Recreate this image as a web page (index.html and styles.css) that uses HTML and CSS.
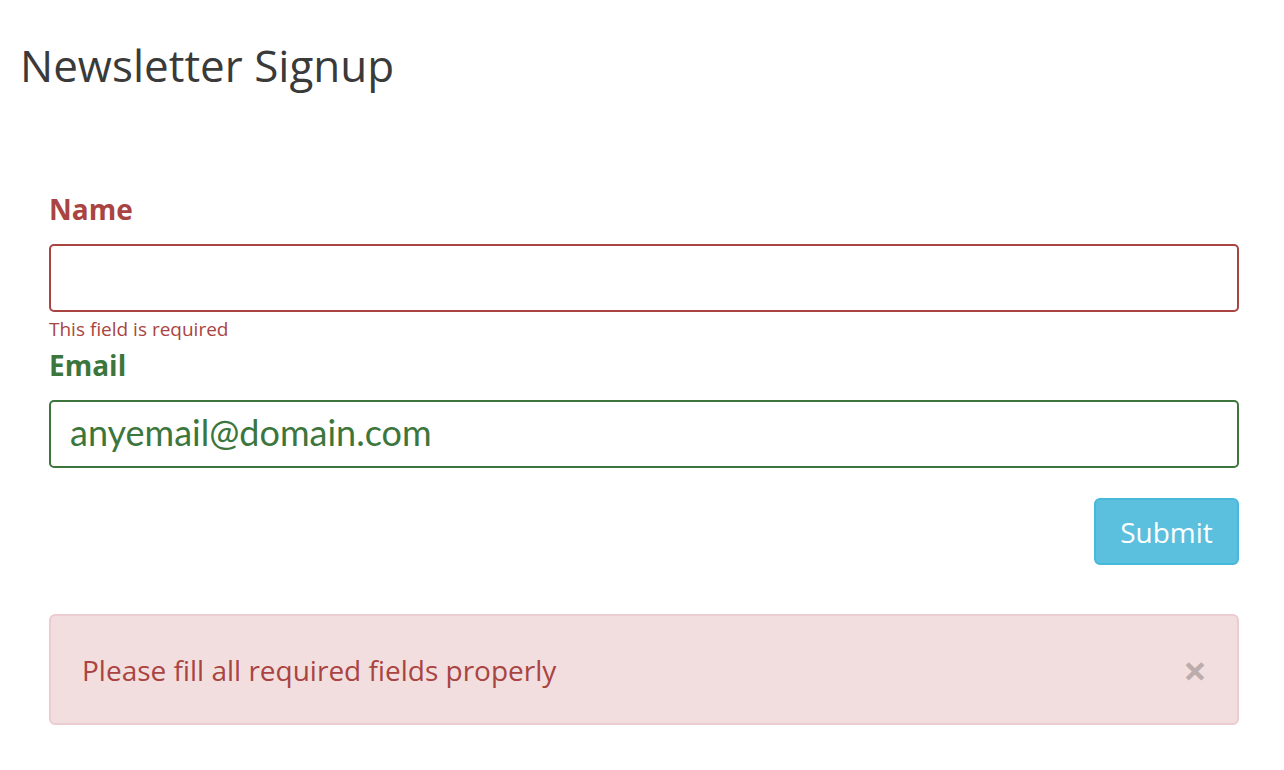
FILE: index.html
```html
<!DOCTYPE html>
<html>
<head>
<meta charset="utf-8">
<link rel="stylesheet" href="styles.css">
</head>
<body>
<h1 class="title">Newsletter Signup</h1>
<form class="form">
  <div class="group has-error">
    <label class="label">Name</label>
    <input class="input" type="text">
    <div class="help">This field is required</div>
  </div>
  <div class="group has-success">
    <label class="label">Email</label>
    <input class="input input-email" type="text" value="anyemail@domain.com">
  </div>
  <div class="actions">
    <button type="button" class="btn">Submit</button>
  </div>
  <div class="alert">
    <span class="alert-text">Please fill all required fields properly</span>
    <span class="close">&times;</span>
  </div>
</form>
</body>
</html>
```
FILE: styles.css
```css
* { box-sizing: border-box; }
body {
  margin: 0;
  font-family: "Open Sans", sans-serif;
  color: #333;
  background: #fff;
}
.title {
  margin: 0;
  padding: 35px 0 0 20px;
  font-size: 44px;
  font-weight: 400;
  line-height: 60px;
  color: #3a3a3a;
}
.form {
  padding: 0 45px 0 49px;
  margin-top: 94px;
  display: flex;
  flex-direction: column;
}
.group {
  display: flex;
  flex-direction: column;
}
.label {
  font-size: 28px;
  font-weight: 700;
  line-height: 40px;
  margin-bottom: 15px;
}
.has-error .label { color: #a94442; }
.has-success .label { color: #3c763d; }
.input {
  height: 68px;
  border: 2px solid #ccc;
  border-radius: 5px;
  padding: 0 19px 5px;
  font-family: "Lato", sans-serif;
  font-size: 36px;
  outline: none;
  width: 100%;
}
.has-error .input { border-color: #a94442; }
.has-success .input { border-color: #3c763d; color: #3c763d; }
.help {
  color: #a94442;
  font-size: 19px;
  line-height: 27px;
  margin-top: 4px;
  margin-bottom: 2px;
}
.actions {
  display: flex;
  justify-content: flex-end;
  margin-top: 30px;
}
.btn {
  width: 145px;
  height: 67px;
  background: #5bc0de;
  border: 2px solid #46b8da;
  border-radius: 6px;
  color: #fff;
  font-family: "Open Sans", sans-serif;
  font-size: 28px;
  padding: 0;
}
.alert {
  margin-top: 49px;
  height: 111px;
  background: #f2dede;
  border: 2px solid #ebccd1;
  border-radius: 6px;
  color: #a94442;
  display: flex;
  align-items: center;
  justify-content: space-between;
  padding: 0 30px 0 31px;
}
.alert-text {
  font-size: 28px;
}
.close {
  font-size: 42px;
  font-weight: 700;
  color: #000;
  opacity: 0.22;
  line-height: 1;
}
```
